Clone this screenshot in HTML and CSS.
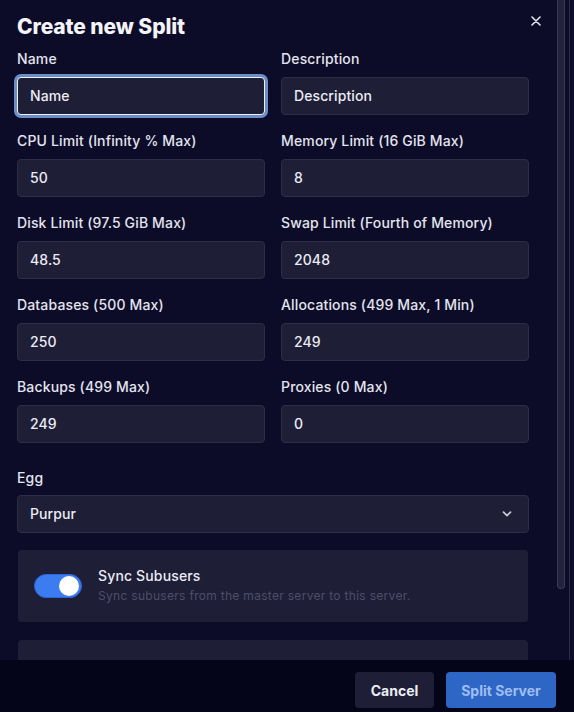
FILE: index.html
```html
<!DOCTYPE html>
<html>
<head>
<meta charset="utf-8">
<link rel="stylesheet" href="styles.css">
</head>
<body>
<div class="modal">
  <div class="content">
    <div class="head">
      <h1 class="title">Create new Split</h1>
      <button class="close" aria-label="Close">
        <svg width="10" height="10" viewBox="0 0 10 10"><path d="M1 1L9 9M9 1L1 9" stroke="#e6e6ef" stroke-width="1.6" stroke-linecap="round"/></svg>
      </button>
    </div>
    <div class="grid">
      <div class="field"><label class="label">Name</label><div class="input focus">Name</div></div>
      <div class="field"><label class="label">Description</label><div class="input">Description</div></div>
      <div class="field"><label class="label">CPU Limit (Infinity % Max)</label><div class="input">50</div></div>
      <div class="field"><label class="label">Memory Limit (16 GiB Max)</label><div class="input">8</div></div>
      <div class="field"><label class="label">Disk Limit (97.5 GiB Max)</label><div class="input">48.5</div></div>
      <div class="field"><label class="label">Swap Limit (Fourth of Memory)</label><div class="input">2048</div></div>
      <div class="field"><label class="label">Databases (500 Max)</label><div class="input">250</div></div>
      <div class="field"><label class="label">Allocations (499 Max, 1 Min)</label><div class="input">249</div></div>
      <div class="field"><label class="label">Backups (499 Max)</label><div class="input">249</div></div>
      <div class="field"><label class="label">Proxies (0 Max)</label><div class="input">0</div></div>
    </div>
    <div class="field egg">
      <label class="label">Egg</label>
      <div class="input select">
        <span>Purpur</span>
        <svg width="10" height="6" viewBox="0 0 10 6"><path d="M1.5 1.2L5 4.6L8.5 1.2" fill="none" stroke="#c9c9d8" stroke-width="1.7" stroke-linecap="round" stroke-linejoin="round"/></svg>
      </div>
    </div>
    <div class="card">
      <div class="toggle"><div class="knob"></div></div>
      <div class="card-text">
        <div class="card-title">Sync Subusers</div>
        <div class="card-sub">Sync subusers from the master server to this server.</div>
      </div>
    </div>
    <div class="card"></div>
    <div class="scrollbar"></div>
    <div class="edge"></div>
  </div>
  <div class="footer">
    <button class="btn cancel">Cancel</button>
    <button class="btn primary">Split Server</button>
  </div>
</div>
</body>
</html>
```
FILE: styles.css
```css
* { box-sizing: border-box; }
html, body { margin: 0; padding: 0; }
body {
  background: #0c0c28;
  font-family: Inter, "Noto Sans", sans-serif;
  color: #e6e6ef;
}
.modal {
  width: 574px;
  height: 712px;
  display: flex;
  flex-direction: column;
}
.content {
  position: relative;
  flex: 1;
  overflow: hidden;
  padding: 13px 45px 0 17px;
}
.head {
  display: flex;
  justify-content: space-between;
  align-items: flex-start;
  height: 28px;
  margin-bottom: 8px;
}
.title {
  margin: 0;
  font-size: 21px;
  line-height: 28px;
  font-weight: 800;
  letter-spacing: -0.1px;
  color: #f3f3f8;
}
.close {
  background: none;
  border: 0;
  padding: 0;
  margin: 3px -12px 0 0;
  width: 10px;
  height: 10px;
  display: flex;
}
.grid {
  display: grid;
  grid-template-columns: 248px 248px;
  column-gap: 16px;
  row-gap: 16px;
}
.field { display: flex; flex-direction: column; }
.label {
  font-size: 14px;
  line-height: 20px;
  font-weight: 500;
  letter-spacing: 0.15px;
  color: #e4e4ee;
  margin-bottom: 8px;
}
.input {
  height: 38px;
  border: 1px solid #2d2d48;
  background: #1e1e37;
  border-radius: 4px;
  padding: 0 12px;
  font-size: 14px;
  font-weight: 500;
  letter-spacing: 0.1px;
  color: #ececf3;
  display: flex;
  align-items: center;
  padding-bottom: 1px;
}
.input.focus {
  border: 1px solid #f0f0f6;
  box-shadow: 0 0 0 3px #6b8ec8;
}
.egg { margin-top: 25px; width: 512px; }
.egg .label { margin-bottom: 7px; }
.select { justify-content: space-between; padding-right: 16px; }
.card {
  margin: 17px 0 0 1px;
  width: 510px;
  height: 72px;
  background: #1e1e37;
  border-radius: 4px;
  display: flex;
  align-items: center;
  padding-left: 16px;
  gap: 16px;
}
.card + .card { margin-top: 18px; }
.toggle {
  width: 48px;
  height: 24px;
  border-radius: 12px;
  background: #3b7cf0;
  border: 1px solid #2f63d6;
  position: relative;
}
.knob {
  position: absolute;
  right: 2px;
  top: 1px;
  width: 20px;
  height: 20px;
  border-radius: 50%;
  background: #ffffff;
}
.card-text { display: flex; flex-direction: column; gap: 4px; margin-top: -2px; }
.card-title { font-size: 14px; line-height: 18px; font-weight: 500; letter-spacing: 0.15px; color: #ececf3; }
.card-sub { font-size: 12px; line-height: 14px; color: #4e4e68; letter-spacing: 0.3px; }
.scrollbar {
  position: absolute;
  left: 557px;
  top: 0;
  width: 8px;
  height: 589px;
  border: 1px solid #3a3a56;
  border-top: 0;
  background: #22223c;
  border-radius: 0 0 4px 4px;
}
.edge {
  position: absolute;
  left: 569px;
  top: 0;
  width: 1px;
  height: 100%;
  background: #2c2c48;
}
.footer {
  height: 52px;
  background: #05051a;
  display: flex;
  justify-content: flex-end;
  align-items: flex-start;
  gap: 12px;
  padding: 12px 18px 0 0;
}
.btn {
  height: 36px;
  border: 0;
  border-radius: 4px;
  padding: 0;
  white-space: nowrap;
  font-family: Inter, "Noto Sans", sans-serif;
  font-size: 14px;
  font-weight: 700;
}
.cancel { width: 79px; background: #1e1e37; color: #ececf3; }
.primary { width: 110px; background: #2e66c6; color: #9fbdf0; }
```
